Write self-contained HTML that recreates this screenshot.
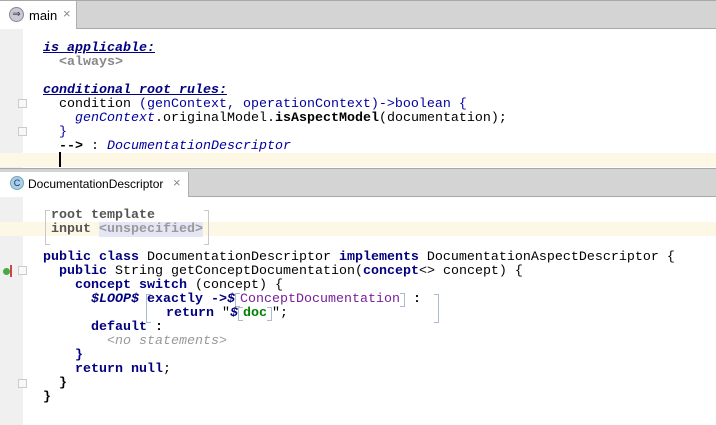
<!DOCTYPE html>
<html><head><meta charset="utf-8"><style>
*{margin:0;padding:0;box-sizing:border-box}
body{width:716px;height:425px;overflow:hidden;background:#fff;position:relative;font-family:"Liberation Mono",monospace;font-size:13.33px}
.bar{position:absolute;left:0;width:716px;background:#d4d4d4;border-top:1px solid #a8a8a8;border-bottom:1px solid #a8a8a8}
.tab{position:absolute;left:0;background:#fff;border-right:1px solid #b0b0b0;font-family:"Liberation Sans",sans-serif;font-size:12px;color:#000}
.gut{position:absolute;left:0;width:23px;background:#f0f0f0}
.cur{position:absolute;left:0;width:716px;height:14px;background:#fdf8e6}
.l{position:absolute;white-space:pre;line-height:14px;height:14px;color:#000}
.k{color:#000080;font-weight:bold}
.b{color:#0000a0}
.i{color:#0000a0;font-style:italic}
.h{font-weight:bold;font-style:italic;text-decoration:underline;color:#000080}
.g{color:#888;font-weight:bold}
.p{color:#7a1f9a}
.gr{color:#008000;font-weight:bold}
.br{display:inline-block;width:5px;height:14px;vertical-align:top;border:1.5px solid #a9bcd4;border-right:none}
.bri{display:inline-block;width:5px;height:14px;vertical-align:top;border:1.5px solid #a9bcd4;border-left:none}
.fold{position:absolute;left:18px;width:9px;height:9px;border:1px solid #ccc;background:#f8f8f8}
</style></head><body>
<div class="bar" style="top:0;height:29px"></div>
<div class="tab" style="top:1px;height:28px;width:77px">
<div style="position:absolute;left:9px;top:6px;width:15px;height:15px;border-radius:50%;background:#c9c9d8;border:1px solid #888;font-size:10px;line-height:13px;text-align:center;color:#334">⇒</div>
<div style="position:absolute;left:29px;top:7px;font-size:13px">main</div>
<div style="position:absolute;left:63px;top:5px;color:#888;font-size:13px">×</div>
</div>
<div class="gut" style="top:29px;height:139px"></div>
<div class="cur" style="top:153px"></div>
<div style="position:absolute;left:59px;top:152px;width:2px;height:15px;background:#000"></div>

<div class="l" style="left:43px;top:42px"><span class="h">is applicable:</span></div>
<div class="l" style="left:59px;top:56px"><span class="g">&lt;always&gt;</span></div>
<div class="l" style="left:43px;top:84px"><span class="h">conditional root rules:</span></div>
<div class="l" style="left:59px;top:98px">condition <span class="b">(genContext, operationContext)-&gt;boolean {</span></div>
<div class="l" style="left:75px;top:112px"><span class="i">genContext</span>.originalModel.<b>isAspectModel</b>(documentation);</div>
<div class="l" style="left:59px;top:126px"><span class="b">}</span></div>
<div class="l" style="left:59px;top:140px"><b>--&gt;</b> : <span class="i">DocumentationDescriptor</span></div>
<div class="fold" style="top:99px"></div>
<div class="fold" style="top:127px"></div>

<div class="bar" style="top:168px;height:29px"></div>
<div class="tab" style="top:172px;height:25px;width:189px">
<div style="position:absolute;left:10px;top:4px;width:14px;height:14px;border-radius:50%;background:#a8cdf0;border:1px solid #7aa;font-size:9px;line-height:12px;text-align:center;color:#234">C</div>
<div style="position:absolute;left:28px;top:5px">DocumentationDescriptor</div>
<div style="position:absolute;left:173px;top:3px;color:#888;font-size:13px">×</div>
</div>
<div class="gut" style="top:197px;height:228px"></div>
<div class="cur" style="top:222px"></div>
<div style="position:absolute;left:45px;top:210px;width:164px;height:35px;border:1.5px solid #c8c8c8;border-top:none;border-bottom:none"></div>
<div style="position:absolute;left:45px;top:210px;width:5px;height:35px;border-top:1.5px solid #c8c8c8;border-bottom:1.5px solid #c8c8c8"></div>
<div style="position:absolute;left:204px;top:210px;width:5px;height:35px;border-top:1.5px solid #c8c8c8;border-bottom:1.5px solid #c8c8c8"></div>
<div class="l" style="left:51px;top:209px"><span class="g" style="color:#555">root template</span></div>
<div class="l" style="left:51px;top:223px"><span class="g" style="color:#555">input </span><span class="g" style="background:#e4e6f6;color:#999">&lt;unspecified&gt;</span></div>
<div class="l" style="left:43px;top:251px"><span class="k">public class</span> DocumentationDescriptor <span class="k">implements</span> DocumentationAspectDescriptor {</div>
<div class="l" style="left:59px;top:265px"><span class="k">public</span> String getConceptDocumentation(<span class="k">concept</span>&lt;&gt; concept) {</div>
<div class="l" style="left:75px;top:279px"><span class="k">concept switch</span> (concept) {</div>
<div class="l" style="left:91px;top:293px"><span class="k" style="font-style:italic">$LOOP$</span> <span class="k">exactly -&gt;<i>$</i></span><span class="br"></span><span class="p">ConceptDocumentation</span><span class="bri"></span> <b>:</b></div>
<div style="position:absolute;left:146px;top:294px;width:5px;height:29px;border:1.5px solid #a9bcd4;border-right:none"></div>
<div style="position:absolute;left:434px;top:294px;width:5px;height:29px;border:1.5px solid #a9bcd4;border-left:none"></div>
<div class="l" style="left:166px;top:307px"><span class="k">return</span> "<span class="k" style="font-style:italic">$</span><span class="br"></span><span class="gr">doc</span><span class="bri"></span>";</div>
<div class="l" style="left:91px;top:321px"><span class="k">default</span> <b>:</b></div>
<div class="l" style="left:107px;top:335px"><span style="color:#999;font-style:italic">&lt;no statements&gt;</span></div>
<div class="l" style="left:75px;top:349px"><span class="k">}</span></div>
<div class="l" style="left:75px;top:363px"><span class="k">return null</span>;</div>
<div class="l" style="left:59px;top:377px"><b>}</b></div>
<div class="l" style="left:43px;top:391px"><b>}</b></div>
<div class="fold" style="top:266px"></div>
<div class="fold" style="top:379px"></div>
<div style="position:absolute;left:3px;top:268px;width:7px;height:7px;border-radius:50%;background:#4a4"></div>
<div style="position:absolute;left:10px;top:265px;width:2px;height:12px;background:#c44"></div>
</body></html>
